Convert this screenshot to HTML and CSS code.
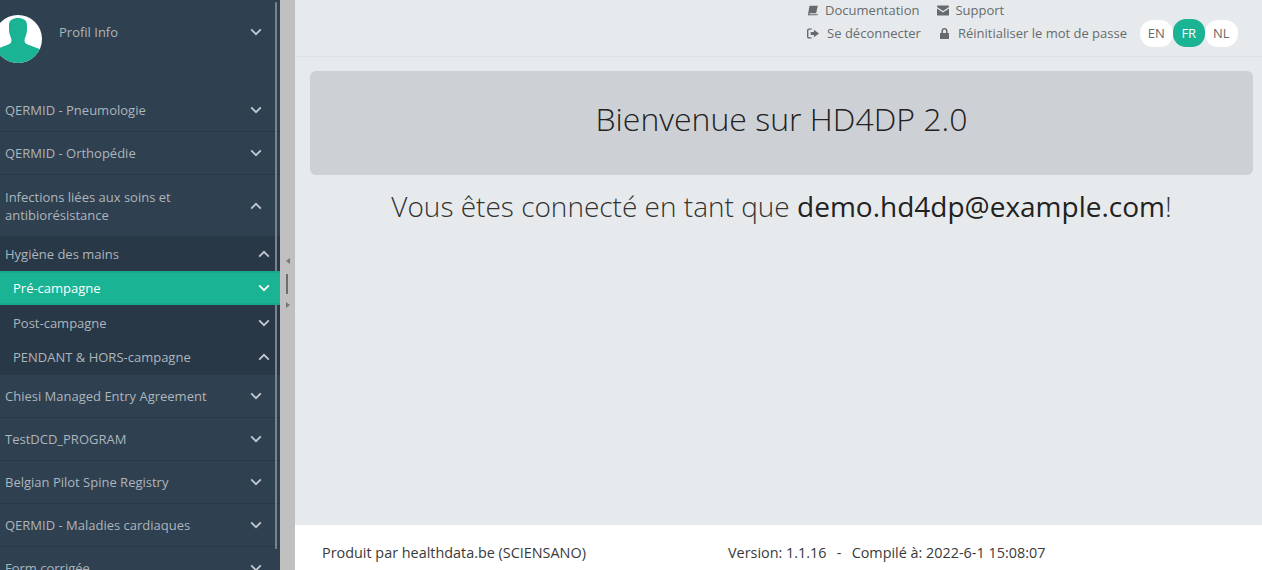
FILE: index.html
```html
<!DOCTYPE html>
<html lang="fr">
  <head>
    <meta charset="UTF-8" />
    <meta name="viewport" content="width=device-width, initial-scale=1.0" />
    <title>HD4DP 2.0</title>
    <link rel="stylesheet" href="styles.css">
  </head>
  <body>
    <svg class="defs" width="0" height="0">
      <symbol id="down" viewBox="0 0 12 8"><path d="M1.2 1.4 6 6.2l4.8-4.8" fill="none" stroke="currentColor" stroke-width="1.8"/></symbol>
      <symbol id="up" viewBox="0 0 12 8"><path d="M1.2 6.6 6 1.8l4.8 4.8" fill="none" stroke="currentColor" stroke-width="1.8"/></symbol>
    </svg>
    <div class="app">
      <aside class="sidebar">
        <div class="profile">
          <svg class="avatar" viewBox="0 0 48 48">
            <circle cx="24" cy="24" r="24" fill="#fff"/>
            <clipPath id="round"><circle cx="24" cy="24" r="24"/></clipPath>
            <path clip-path="url(#round)" fill="#1ab394" d="M24 3c5 0 9 2 9 7v5c0 4-2 7-2.500 10 0 3 1.500 4 4.500 5l13 5v13H0V35l13-5c3-1 4.500-2 4.500-5C17 22 15 19 15 15v-5c0-5 4-7 9-7z"/>
          </svg>
          <span class="profile_name">Profil Info</span>
          <svg class="chev"><use href="#down"/></svg>
        </div>
        <ul class="menu">
          <li><span>QERMID - Pneumologie</span><svg class="chev"><use href="#down"/></svg></li>
          <li><span>QERMID - Orthopédie</span><svg class="chev"><use href="#down"/></svg></li>
          <li class="tall"><span>Infections liées aux soins et antibiorésistance</span><svg class="chev"><use href="#up"/></svg></li>
          <li class="sub_head"><span>Hygiène des mains</span><svg class="chev"><use href="#up"/></svg></li>
          <li class="sub current"><span>Pré-campagne</span><svg class="chev"><use href="#down"/></svg></li>
          <li class="sub"><span>Post-campagne</span><svg class="chev"><use href="#down"/></svg></li>
          <li class="sub last"><span>PENDANT &amp; HORS-campagne</span><svg class="chev"><use href="#up"/></svg></li>
          <li><span>Chiesi Managed Entry Agreement</span><svg class="chev"><use href="#down"/></svg></li>
          <li><span>TestDCD_PROGRAM</span><svg class="chev"><use href="#down"/></svg></li>
          <li><span>Belgian Pilot Spine Registry</span><svg class="chev"><use href="#down"/></svg></li>
          <li><span>QERMID - Maladies cardiaques</span><svg class="chev"><use href="#down"/></svg></li>
          <li><span>Form corrigée</span><svg class="chev"><use href="#down"/></svg></li>
        </ul>
        <div class="scrollbar"></div>
      </aside>
      <div class="splitter">
        <i class="arrow_left"></i>
        <i class="grip"></i>
        <i class="arrow_right"></i>
      </div>
      <main class="main">
        <header class="topbar">
          <div class="links">
            <div class="links_row">
              <a>
                <svg class="ico" viewBox="0 0 12 12"><path fill="currentColor" d="M3 .8h8.300L9.400 9H2.600c-.7 0-.9.900-.2 1h7.900l1-.9-.5 2H2.200C.8 12 .4 10.800.7 9.500L2 2C2.200 1.200 2.400.8 3 .8z"/></svg>
                Documentation
              </a>
              <a>
                <svg class="ico" viewBox="0 0 13 11"><path fill="currentColor" d="M1 0h11c.6 0 1 .4 1 1v.8L6.500 6 0 1.800V1c0-.6.400-1 1-1zM0 3.400l6.500 4.200L13 3.400V10c0 .6-.4 1-1 1H1c-.6 0-1-.4-1-1z"/></svg>
                Support
              </a>
            </div>
            <div class="links_row">
              <a class="logout">
                <svg class="ico" viewBox="0 0 13 11"><path fill="currentColor" d="M2 0h3v1.500H2.300c-.5 0-.8.300-.8.800v6.400c0 .5.300.8.800.8H5V11H2c-1.100 0-2-.9-2-2V2C0 .9.900 0 2 0zm5.500 1.500L13 5.500l-5.500 4V7H4V4h3.500z"/></svg>
                Se déconnecter
              </a>
              <a class="reset">
                <svg class="ico lock" viewBox="0 0 9 11"><path fill="currentColor" d="M4.500 0C6.300 0 7.500 1.200 7.500 3v2H9v6H0V5h1.500V3C1.500 1.200 2.700 0 4.500 0zm0 1.500C3.600 1.500 3 2.100 3 3v2h3V3c0-.9-.6-1.500-1.500-1.500z"/></svg>
                Réinitialiser le mot de passe
              </a>
            </div>
          </div>
          <div class="langs">
            <span>EN</span>
            <span class="active">FR</span>
            <span>NL</span>
          </div>
        </header>
        <div class="content">
          <div class="jumbo">Bienvenue sur HD4DP 2.0</div>
          <p class="welcome">Vous êtes connecté en tant que <b>demo.hd4dp@example.com</b>!</p>
        </div>
        <footer class="footer">
          <span class="made">Produit par healthdata.be (SCIENSANO)</span>
          <span>Version: 1.1.16 <span class="sep">-</span> Compilé à: 2022-6-1 15:08:07</span>
        </footer>
      </main>
    </div>
  </body>
</html>
```

FILE: styles.css
```css
* {
  margin: 0;
  padding: 0;
  box-sizing: border-box;
}

html,
body {
  height: 570px;
  overflow: hidden;
}

body {
  font-family: "Open Sans", "Liberation Sans", sans-serif;
  font-size: 13px;
  color: #676a6c;
  background-color: #e7eaec;
}

li {
  list-style-type: none;
}

.defs {
  position: absolute;
}

.app {
  display: flex;
  height: 570px;
}

.sidebar {
  position: relative;
  width: 280px;
  flex-shrink: 0;
  overflow: hidden;
  background-color: #2f4050;
  color: #adb5bd;
}

.scrollbar {
  position: absolute;
  top: 2px;
  right: 3px;
  width: 2px;
  height: 547px;
  border-radius: 1px;
  background-color: #77828e;
}

.profile {
  display: flex;
  align-items: center;
  height: 89px;
  padding: 0 18px 25px 0;
}

.avatar {
  width: 48px;
  height: 48px;
  margin: 14px 0 0 -6px;
  flex-shrink: 0;
}

.profile_name {
  flex: 1;
  margin-left: 17px;
}

.chev {
  width: 12px;
  height: 8px;
  flex-shrink: 0;
  color: #c3c9d2;
}

.menu li {
  display: flex;
  align-items: center;
  justify-content: space-between;
  height: 43px;
  padding: 0 18px 0 5px;
  border-bottom: 1px solid #293846;
  line-height: 18px;
}

.menu li.tall {
  height: 62px;
}

.menu li.tall span {
  width: 190px;
}

.menu .sub_head,
.menu .sub {
  height: 35px;
  padding-right: 10px;
  border-bottom: 0;
  background-color: #293846;
}

.menu .sub_head {
  height: 34px;
}

.menu .sub {
  padding-left: 13px;
}

.menu .last {
  padding-bottom: 1px;
}

.menu .current {
  position: relative;
  z-index: 1;
  height: 34px;
  background-color: #1ab394;
  color: #fff;
  font-weight: 500;
  border-top: 2px solid #19a88c;
  border-bottom: 2px solid #19a88c;
}

.current .chev {
  color: #fff;
}

.splitter {
  position: relative;
  width: 15px;
  flex-shrink: 0;
  background-color: #c0c0c0;
}

.grip {
  position: absolute;
  top: 274px;
  left: 6px;
  width: 2px;
  height: 20px;
  background-color: #6e6e6e;
}

.arrow_left,
.arrow_right {
  position: absolute;
  left: 6px;
  border-top: 3px solid transparent;
  border-bottom: 3px solid transparent;
}

.arrow_left {
  top: 258px;
  border-right: 4px solid #777;
}

.arrow_right {
  top: 302px;
  border-left: 4px solid #777;
}

.main {
  flex: 1;
  display: flex;
  flex-direction: column;
  min-width: 0;
}

.topbar {
  display: flex;
  justify-content: flex-end;
  height: 57px;
  padding-right: 24.500px;
  border-bottom: 1px solid #dfe2e5;
}

.links {
  display: flex;
  flex-direction: column;
  gap: 3px;
  margin-right: 13px;
}

.links_row {
  display: flex;
  height: 20px;
  line-height: 20px;
}

.links_row a {
  display: flex;
  align-items: center;
  color: #676a6c;
  margin-right: 18px;
}

.links_row a.logout {
  margin-right: 19px;
}

.links_row a:last-child {
  margin-right: 0;
}

.ico {
  width: 12px;
  height: 11px;
  margin-right: 6px;
}

.logout .ico {
  margin-right: 8px;
}

.ico.lock {
  width: 9px;
  margin-right: 9px;
}

.langs {
  display: flex;
  align-items: center;
  height: 28px;
  margin-top: 19px;
}

.langs span {
  width: 32.500px;
  height: 27px;
  line-height: 27px;
  text-align: center;
  background-color: #fff;
  border-radius: 13px;
}

.langs .active {
  height: 28px;
  line-height: 28px;
  background-color: #1ab394;
  color: #fff;
}

.content {
  flex: 1;
  padding: 14px 9px 0 15px;
}

.jumbo {
  height: 104px;
  line-height: 95px;
  text-align: center;
  font-size: 32px;
  font-weight: 300;
  color: #222;
  background-color: #cdd1d5;
  border-radius: 6px;
}

.welcome {
  margin-top: 10px;
  text-align: center;
  font-size: 28px;
  font-weight: 300;
  line-height: 42px;
  color: #333;
}

.welcome b {
  font-weight: 400;
  color: #222;
}

.footer {
  display: flex;
  align-items: center;
  height: 45px;
  padding: 10px 0 0 27px;
  background-color: #fff;
  font-size: 14.400px;
  color: #3a3a3a;
}

.made {
  width: 406px;
}

.sep {
  margin: 0 6.500px;
}
```
